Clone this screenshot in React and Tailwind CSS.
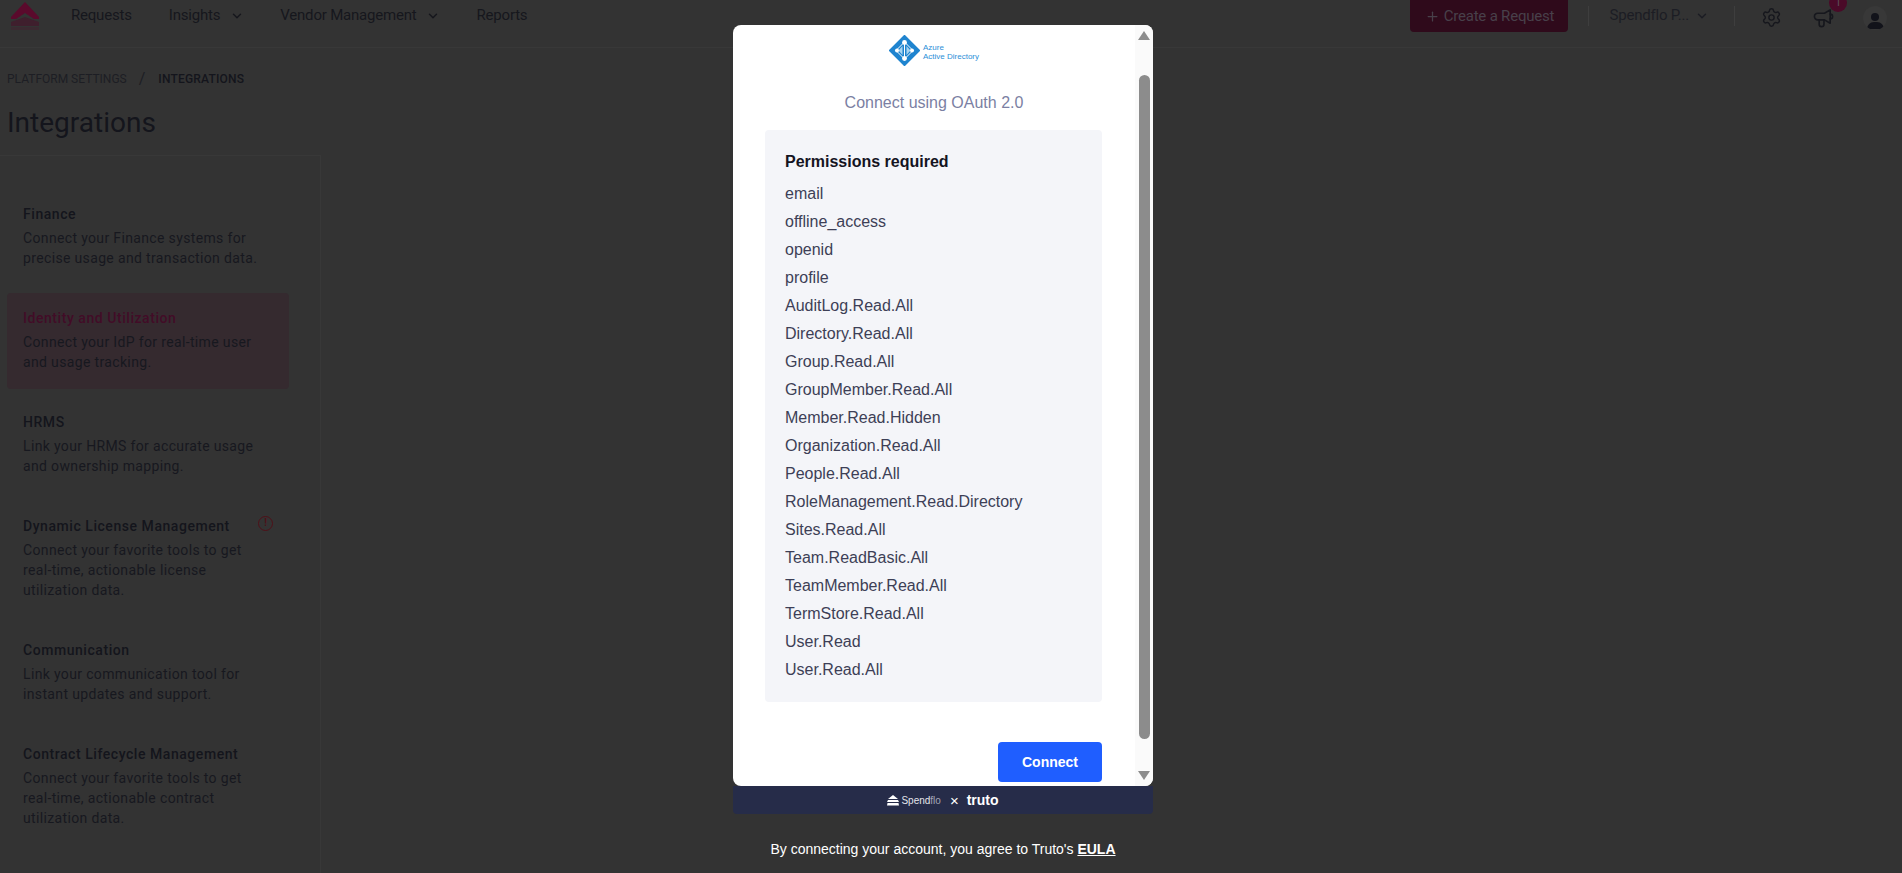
import React from 'react';
import { ChevronDown, Plus, Settings } from 'lucide-react';

const sections = [
  { title: 'Finance', lines: ['Connect your Finance systems for', 'precise usage and transaction data.'] },
  { title: 'Identity and Utilization', lines: ['Connect your IdP for real-time user', 'and usage tracking.'], active: true },
  { title: 'HRMS', lines: ['Link your HRMS for accurate usage', 'and ownership mapping.'] },
  { title: 'Dynamic License Management', lines: ['Connect your favorite tools to get', 'real-time, actionable license', 'utilization data.'], alert: true },
  { title: 'Communication', lines: ['Link your communication tool for', 'instant updates and support.'] },
  { title: 'Contract Lifecycle Management', lines: ['Connect your favorite tools to get', 'real-time, actionable contract', 'utilization data.'] },
];

const permissions = [
  'email', 'offline_access', 'openid', 'profile', 'AuditLog.Read.All', 'Directory.Read.All',
  'Group.Read.All', 'GroupMember.Read.All', 'Member.Read.Hidden', 'Organization.Read.All',
  'People.Read.All', 'RoleManagement.Read.Directory', 'Sites.Read.All', 'Team.ReadBasic.All',
  'TeamMember.Read.All', 'TermStore.Read.All', 'User.Read', 'User.Read.All',
];

const BrandLogo = () => (
  <svg width="28" height="29" viewBox="0 0 28 29">
    <path d="M14 0 L28 15 V17 H23 L14 11 L5 17 H0 V15 Z" fill="#5a0a2c" />
    <path d="M0 20 L14 15 L28 20 V24 H0 Z" fill="#3f1f2d" />
    <rect x="0" y="25" width="28" height="3" fill="#3b2a31" />
  </svg>
);

const AzureLogo = () => (
  <svg width="31" height="31" viewBox="0 0 31 31">
    <path d="M15.5 1 L30 15.5 L15.5 30 L1 15.5 Z" fill="#1f84cf" stroke="#1f84cf" strokeWidth="2" strokeLinejoin="round" />
    <path d="M15.5 7 L24 15.5 L15.5 24 L7 15.5 Z" fill="none" stroke="#ffffff" strokeWidth="1" />
    <path d="M15.5 7 V24" stroke="#ffffff" strokeWidth="1" />
    <path d="M13.5 11 L9.5 15.5 L13.5 20 Z M17.5 11 L21.5 15.5 L17.5 20 Z" fill="#a9d4f0" />
    <circle cx="15.5" cy="7.5" r="2.4" fill="#ffffff" />
    <circle cx="15.5" cy="23.5" r="2.4" fill="#ffffff" />
    <circle cx="8" cy="15.5" r="2" fill="#ffffff" />
    <circle cx="23" cy="15.5" r="2" fill="#ffffff" />
  </svg>
);

const SpendfloMark = () => (
  <svg width="12" height="11" viewBox="0 0 12 11">
    <path d="M6 0 L11 4 H1 Z" fill="#ffffff" />
    <path d="M1 5 H11 L12 7 H0 Z" fill="#ffffff" />
    <path d="M0.5 8 H11.5 L12 10.5 H0 Z" fill="#ffffff" />
  </svg>
);

const AnnounceIcon = () => (
  <svg width="21" height="21" viewBox="0 0 22 22" fill="none" stroke="currentColor" strokeWidth="1.7" strokeLinecap="round" strokeLinejoin="round">
    <path d="M12 6.5 L18 3 V17 L12 13.5 H5 a3.5 3.5 0 0 1 0 -7 Z" />
    <path d="M18 7.5 a2.5 2.5 0 0 1 0 5" />
    <path d="M6.5 13.5 V18 a2.5 2.5 0 0 0 5 0 V13.5" />
  </svg>
);

const Header = () => (
  <header className="h-[48px] flex items-start border-b border-[#383838] text-[15px] tracking-[-0.2px] text-[#16171d]">
    <div className="w-[71px] pl-[11px] pt-[2px]">
      <BrandLogo />
    </div>
    <nav className="flex items-center h-[31px] whitespace-nowrap">
      <span>Requests</span>
      <span className="ml-[37px]">Insights</span>
      <ChevronDown className="ml-[10px] h-[14px] w-[14px]" strokeWidth={2.5} />
      <span className="ml-[36px]">Vendor Management</span>
      <ChevronDown className="ml-[9px] h-[14px] w-[14px]" strokeWidth={2.5} />
      <span className="ml-[37px]">Reports</span>
    </nav>
    <div className="ml-auto flex items-start">
      <button className="h-[32px] w-[158px] flex items-center justify-center gap-[4px] rounded-b bg-[#2f0a1b] text-[#48404a]">
        <Plus className="h-[15px] w-[15px]" />
        <span>Create a Request</span>
      </button>
      <div className="ml-[20px] mt-[6px] h-[20px] w-px bg-[#3e3e3e]" />
      <div className="ml-[20px] h-[31px] flex items-center text-[#1c1d24]">
        <span>Spendflo P...</span>
        <ChevronDown className="ml-[6px] h-[14px] w-[14px]" strokeWidth={2.5} />
      </div>
      <div className="ml-[25px] mt-[6px] h-[20px] w-px bg-[#3e3e3e]" />
      <Settings className="ml-[26px] mt-[7px] h-[21px] w-[21px]" strokeWidth={1.6} />
      <div className="relative ml-[31px] mt-[7px]">
        <AnnounceIcon />
        <span className="absolute -top-[13px] left-[16px] h-[18px] w-[18px] rounded-full bg-[#4a0a28] text-center text-[11px] leading-[18px] text-[#5c5058]">1</span>
      </div>
      <div className="ml-[29px] mr-[15px] mt-[6px] h-[24px] w-[24px] rounded-full bg-[#383838] overflow-hidden flex flex-col items-center">
        <span className="mt-[7px] h-[8px] w-[8px] rounded-full bg-[#12131a]" />
        <span className="mt-px h-[7px] w-[17px] rounded-t-full bg-[#12131a]" />
      </div>
    </div>
  </header>
);

const Sidebar = () => (
  <aside className="w-[321px] h-[718px] border-t border-r border-[#383838] pt-[33px] pl-[7px] pr-[31px]">
    <div className="flex flex-col gap-[8px]">
      {sections.map((s) => (
        <div key={s.title} className={s.active ? 'rounded bg-[#352a2f] pl-[16px] pt-[16px] pb-[17px]' : 'pl-[16px] pt-[16px] pb-[17px]'}>
          <div className="relative flex items-center h-[18px] mb-[5px] whitespace-nowrap">
            <span className={s.active ? 'text-[14px] font-medium tracking-[0.55px] text-[#420c27]' : 'text-[14px] font-medium tracking-[0.55px] text-[#14151c]'}>{s.title}</span>
            {s.alert && (
              <span className="absolute left-[235px] -top-[1px] h-[15px] w-[15px] rounded-full border-[1.5px] border-[#4f1018] text-center text-[10px] leading-[12px] font-bold text-[#4f1018]">!</span>
            )}
          </div>
          {s.lines.map((l) => (
            <div key={l} className="text-[14px] leading-[20px] tracking-[0.35px] whitespace-nowrap text-[#17181f]">{l}</div>
          ))}
        </div>
      ))}
    </div>
  </aside>
);

const FakeScrollbar = () => (
  <div className="w-[18px] bg-[#fafafa] flex flex-col items-center pt-[6px]">
    <div className="h-0 w-0 border-x-[6.5px] border-x-transparent border-b-[9px] border-b-[#8c8c8c]" />
    <div className="mt-[35px] h-[664px] w-[11px] rounded-full bg-[#8c8c8c]" />
    <div className="mt-[32px] h-0 w-0 border-x-[6.5px] border-x-transparent border-t-[9px] border-t-[#8c8c8c]" />
  </div>
);

const ConnectModal = () => (
  <div className="absolute inset-0 flex flex-col items-center font-['Liberation_Sans',Arial,sans-serif]">
    <div className="mt-[25px] w-[420px] ml-[-16px]">
      <div className="h-[761px] flex rounded-lg overflow-hidden bg-white">
        <div className="flex-1 flex flex-col">
          <div className="h-[50px] pt-[10px] flex justify-center gap-[3px]">
            <AzureLogo />
            <div className="pt-[8px] text-[8px] leading-[9px] text-[#2b8fd8]">
              <div>Azure</div>
              <div>Active Directory</div>
            </div>
          </div>
          <h2 className="mt-[19px] text-center text-[16px] leading-[18px] text-[#7b7fa3]">Connect using OAuth 2.0</h2>
          <div className="mt-[18px] ml-[32px] mr-[33px] rounded bg-[#f4f5f9] pl-[20px] pt-[20px] pb-[18px]">
            <div className="mb-[6px] text-[16px] leading-[24px] font-bold text-[#14141f]">Permissions required</div>
            {permissions.map((p) => (
              <div key={p} className="text-[16px] leading-[28px] text-[#3d3f56]">{p}</div>
            ))}
          </div>
          <div className="mt-[40px] mr-[33px] flex justify-end">
            <button className="h-[40px] w-[104px] rounded bg-[#1f5eff] text-[14px] font-bold text-white">Connect</button>
          </div>
        </div>
        <FakeScrollbar />
      </div>
      <div className="h-[28px] rounded-b bg-[#262c49] flex items-center justify-center text-white">
        <SpendfloMark />
        <span className="ml-[2px] text-[10px] text-[#e4e5ea]">Spend<span className="text-[#a3a6b5]">flo</span></span>
        <span className="ml-[9px] text-[15px] leading-none">×</span>
        <span className="ml-[8px] text-[14px] font-bold">truto</span>
      </div>
    </div>
    <p className="mt-[26px] ml-[-16px] text-[14px] leading-[18px] text-white">
      By connecting your account, you agree to Truto's <a className="font-bold underline">EULA</a>
    </p>
  </div>
);

export default function App() {
  return (
    <div className="relative h-[873px] overflow-hidden bg-[#333333] font-['Roboto',sans-serif]">
      <Header />
      <div className="pl-[7px] h-[62px] flex items-center text-[12px] uppercase">
        <span className="text-[#1d1e24]">Platform Settings</span>
        <span className="ml-[12px] text-[16px] text-[#1d1e24]">/</span>
        <span className="ml-[13px] font-medium tracking-[0.2px] text-[#14151c]">Integrations</span>
      </div>
      <h1 className="pl-[7px] mt-[-5px] text-[28px] leading-[36px] text-[#14151c] h-[50px]">Integrations</h1>
      <Sidebar />
      <ConnectModal />
    </div>
  );
}
